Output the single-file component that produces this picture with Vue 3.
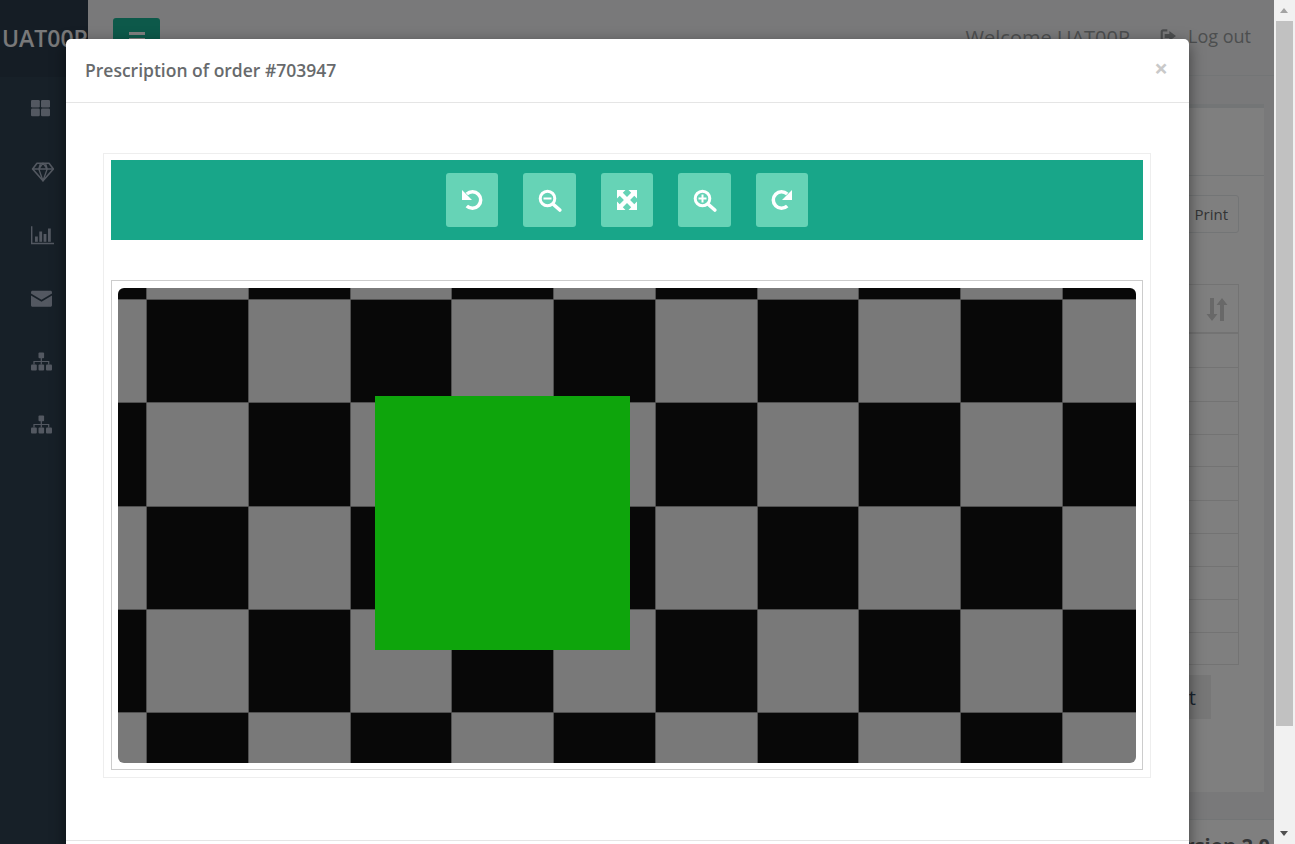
<script setup>
const navIcons = ['grid', 'gem', 'chart', 'mail', 'tree', 'tree']
const tools = [
  { name: 'undo', width: 52 },
  { name: 'minus', width: 53 },
  { name: 'expand', width: 52 },
  { name: 'plus', width: 53 },
  { name: 'redo', width: 52 }
]
const rowHeights = [34, 34, 33, 32, 34, 33, 33, 33, 33, 32]

const imageWidth = 1018
const imageHeight = 475
const xEdges = [0, 29, 131, 233, 334, 436, 538, 640, 741, 843, 945, imageWidth]
const yEdges = [0, 12, 115, 219, 322, 425, imageHeight]
const cells = []
for (let row = 0; row < yEdges.length - 1; row++) {
  for (let col = 0; col < xEdges.length - 1; col++) {
    cells.push({
      id: row + '-' + col,
      x: xEdges[col],
      y: yEdges[row],
      w: xEdges[col + 1] - xEdges[col],
      h: yEdges[row + 1] - yEdges[row],
      fill: (row + col) % 2 === 0 ? '#080808' : '#797979'
    })
  }
}
const innerX = xEdges.slice(1, -1)
const innerY = yEdges.slice(1, -1)
</script>

<template>
  <div class="screen">
    <div class="viewport">
      <div class="page">
        <aside class="sidebar">
          <div class="brand">UAT00P</div>
          <nav class="nav">
            <svg v-for="(icon, i) in navIcons" :key="i" class="nav-icon" viewBox="0 0 24 22">
              <g v-if="icon === 'grid'" fill="currentColor">
                <rect x="1" y="3" width="8.800" height="7.600" rx="1.300" />
                <rect x="11" y="3" width="9" height="7.600" rx="1.300" />
                <rect x="1" y="11.600" width="8.800" height="7.600" rx="1.300" />
                <rect x="11" y="11.600" width="9" height="7.600" rx="1.300" />
              </g>
              <g v-else-if="icon === 'gem'" fill="none" stroke="currentColor" stroke-linejoin="round">
                <path stroke-width="1.600" d="M7 3.200h12L23.400 9 13 20.800 2.600 9z" />
                <path stroke-width="1.300" d="M2.600 9h20.800M8.800 9 13 20.800 17.200 9M8.800 9 10.500 3.200M17.200 9 15.500 3.200M8.800 9 13 3.200 17.200 9" />
              </g>
              <g v-else-if="icon === 'chart'" fill="currentColor">
                <path d="M1 2.200h1.400v16.600H24v1.400H1z" />
                <rect x="5" y="12.500" width="2.800" height="5.300" />
                <rect x="9.300" y="7.500" width="2.800" height="10.300" />
                <rect x="13.600" y="10" width="2.800" height="7.800" />
                <rect x="18" y="4.500" width="2.800" height="13.300" />
              </g>
              <g v-else-if="icon === 'mail'" fill="currentColor">
                <path d="M1 5.300C1 4.500 1.700 3.800 2.500 3.800h18c.8 0 1.500.7 1.500 1.500v1.100L11.500 12.800 1 6.400z" />
                <path d="M1 8.400 11.500 14.800 22 8.400v9.900c0 .8-.7 1.500-1.500 1.500h-18C1.700 19.800 1 19.100 1 18.300z" />
              </g>
              <g v-else fill="currentColor">
                <rect x="8.500" y="1.400" width="5.600" height="5.800" rx="1" />
                <rect x="1" y="13.600" width="5.800" height="5.800" rx="1" />
                <rect x="8.500" y="13.600" width="5.600" height="5.800" rx="1" />
                <rect x="16" y="13.600" width="6" height="5.800" rx="1" />
                <path d="M10.700 7h1.200v2.900h7.400v3.700h-1.200v-2.500H4.600v2.500H3.400V9.900h7.300zM10.700 11h1.200v2.600h-1.200z" />
              </g>
            </svg>
          </nav>
        </aside>

        <div class="main">
          <header class="topbar">
            <button class="menu-btn" type="button">
              <span class="bars"><i></i><i></i><i></i></span>
            </button>
            <span class="welcome">Welcome UAT00P</span>
            <span class="logout">
              <svg class="logout-icon" viewBox="0 0 24 24">
                <path fill="currentColor" d="M1 5.500C1 3.500 2.500 2 4.500 2H11v3.200H5c-.5 0-.8.3-.8.8v12c0 .5.300.8.8.8h6V22H4.500C2.500 22 1 20.500 1 18.500zM14 4.500 24 12l-10 7.500v-4.500H7V9h7z" />
              </svg>
              Log out
            </span>
          </header>

          <section class="content">
            <div class="card">
              <div class="card-title"></div>
              <div class="card-body">
                <div class="actions"><button class="print-btn" type="button">Print</button></div>
                <div class="table">
                  <div class="table-head">
                    <svg class="sort-icon" viewBox="0 0 24 24">
                      <path fill="currentColor" d="M5 1h4v16h3.500L7 24 1.500 17H5zM15 8h-3.500L17 1l5.500 7H19v16h-4z" />
                    </svg>
                  </div>
                  <div v-for="(h, i) in rowHeights" :key="i" class="table-row" :style="{ height: h + 'px' }"></div>
                </div>
                <div class="pager"><button class="next-btn" type="button">Next</button></div>
              </div>
            </div>
          </section>

          <footer class="footer"><strong>Version 2.0</strong></footer>
        </div>
      </div>

      <div class="backdrop"></div>

      <div class="modal">
        <div class="modal-header">
          <h4 class="modal-title">Prescription of order #703947</h4>
          <span class="close">×</span>
        </div>
        <div class="modal-body">
          <div class="viewer">
            <div class="toolbar">
              <button
                v-for="tool in tools"
                :key="tool.name"
                class="tool"
                type="button"
                :style="{ width: tool.width + 'px' }"
              >
                <svg class="tool-icon" viewBox="0 0 24 24">
                  <g v-if="tool.name === 'undo'">
                    <path fill="none" stroke="currentColor" stroke-width="3.500" d="M6.800 6.100A8.200 8.200 0 1 1 6.800 17.900" />
                    <path fill="currentColor" d="M2 2v10h10z" />
                  </g>
                  <g v-else-if="tool.name === 'redo'">
                    <path fill="none" stroke="currentColor" stroke-width="3.500" d="M17.200 6.100A8.200 8.200 0 1 0 17.200 17.900" />
                    <path fill="currentColor" d="M22 2v10H12z" />
                  </g>
                  <g v-else-if="tool.name === 'minus' || tool.name === 'plus'">
                    <circle cx="9.500" cy="10.500" r="7.300" fill="none" stroke="currentColor" stroke-width="3" />
                    <path d="M15.500 16.500 21.800 22" stroke="currentColor" stroke-width="3.600" stroke-linecap="round" />
                    <path d="M5.500 10.500h8" stroke="currentColor" stroke-width="2" />
                    <path v-if="tool.name === 'plus'" d="M9.500 6.500v8" stroke="currentColor" stroke-width="2" />
                  </g>
                  <g v-else fill="currentColor">
                    <path d="M2 2h8.500L7.800 4.700l4.200 4.200 4.200-4.200L13.500 2H22v8.500l-2.700-2.700-4.200 4.200 4.200 4.200 2.700-2.700V22h-8.500l2.700-2.700-4.200-4.200-4.200 4.200 2.700 2.700H2v-8.500l2.700 2.700 4.200-4.200-4.200-4.200L2 10.500z" />
                  </g>
                </svg>
              </button>
            </div>
            <div class="image-frame">
              <div class="image">
                <svg class="checker" :viewBox="`0 0 ${imageWidth} ${imageHeight}`" shape-rendering="crispEdges">
                  <rect v-for="c in cells" :key="c.id" :x="c.x" :y="c.y" :width="c.w" :height="c.h" :fill="c.fill" />
                  <rect v-for="x in innerX" :key="'v' + x" :x="x - 1" y="0" width="1" :height="imageHeight" fill="#505050" />
                  <rect v-for="y in innerY" :key="'h' + y" x="0" :y="y - 1" :width="imageWidth" height="1" fill="#505050" />
                  <rect x="257" y="108" width="255" height="254" fill="#0ea50c" />
                </svg>
              </div>
            </div>
          </div>
        </div>
        <div class="modal-footer"></div>
      </div>
    </div>

    <div class="scrollbar">
      <span class="arrow arrow-up"></span>
      <span class="thumb"></span>
      <span class="arrow arrow-down"></span>
    </div>
  </div>
</template>

<style>
html, body { margin: 0; overflow: hidden; }
</style>

<style scoped>
.screen {
  display: flex;
  width: 1295px;
  height: 844px;
  overflow: hidden;
  font-family: "Open Sans", "Liberation Sans", sans-serif;
  color: #676a6c;
}
.viewport {
  position: relative;
  width: 1274px;
  height: 844px;
  overflow: hidden;
  flex: none;
}
.page {
  display: flex;
  height: 844px;
  background: #f3f3f4;
}
.sidebar {
  width: 88px;
  flex: none;
  background: #2f4050;
}
.brand {
  height: 77px;
  box-sizing: border-box;
  padding: 23px 0 0 2px;
  background: #2a3a4a;
  color: #f3f3f4;
  font-size: 23px;
  font-weight: 600;
  line-height: 30px;
  white-space: nowrap;
  overflow: hidden;
}
.nav {
  display: flex;
  flex-direction: column;
  gap: 41.400px;
  padding: 20px 0 0 30px;
  color: #a7b1c2;
}
.nav-icon {
  display: block;
  width: 24px;
  height: 22px;
}
.main {
  flex: 1;
  min-width: 0;
  display: flex;
  flex-direction: column;
}
.topbar {
  height: 76px;
  box-sizing: border-box;
  flex: none;
  display: flex;
  align-items: center;
  padding: 0 23px 0 25px;
  border-bottom: 1px solid #e7eaec;
  color: #999c9e;
  font-size: 18px;
}
.menu-btn {
  width: 47px;
  height: 42px;
  margin: 3px auto 0 0;
  padding: 0;
  border: 0;
  border-radius: 3px;
  background: #1ab394;
  display: flex;
  align-items: center;
  justify-content: center;
}
.bars {
  display: flex;
  flex-direction: column;
  gap: 3px;
  width: 16px;
}
.bars i {
  height: 3px;
  background: #fff;
}
.welcome {
  margin-right: 30px;
  font-size: 20px;
  white-space: nowrap;
}
.logout {
  display: flex;
  align-items: center;
  gap: 12px;
  margin-top: -3px;
  white-space: nowrap;
}
.logout-icon {
  width: 16px;
  height: 16px;
}
.content {
  flex: 1;
  min-height: 0;
  padding: 28px 10px 27px 24px;
}
.card {
  height: 688px;
  box-sizing: border-box;
  border-top: 4px solid #e7eaec;
  background: #fff;
}
.card-title {
  height: 67px;
  border-bottom: 1px solid #e7eaec;
}
.card-body {
  padding: 19px 25px 0 25px;
}
.actions {
  display: flex;
  justify-content: flex-end;
  height: 89px;
}
.print-btn {
  height: 38px;
  padding: 0 10px 0 60px;
  border: 1px solid #e7eaec;
  border-radius: 3px;
  background: #fff;
  color: #676a6c;
  font: 15px "Open Sans", sans-serif;
}
.table {
  border: 1px solid #e7e7e7;
  border-width: 1px 1px 0;
}
.table-head {
  height: 47px;
  border-bottom: 2px solid #e7e7e7;
  display: flex;
  align-items: center;
  justify-content: flex-end;
  padding-right: 9px;
}
.sort-icon {
  width: 24px;
  height: 24px;
  color: #d0d0d0;
}
.table-row {
  box-sizing: border-box;
  border-bottom: 1px solid #e7e7e7;
}
.pager {
  display: flex;
  justify-content: flex-end;
  padding: 10px 28px 0 0;
}
.next-btn {
  height: 44px;
  padding: 0 15px;
  border: 0;
  background: #eeeeee;
  color: #34495e;
  font: 20px "Open Sans", sans-serif;
}
.footer {
  height: 25px;
  flex: none;
  box-sizing: border-box;
  border-top: 1px solid #e7eaec;
  background: #fff;
  padding: 11px 4px 0 0;
  text-align: right;
  font-size: 20px;
  line-height: 30px;
  white-space: nowrap;
}
.backdrop {
  position: absolute;
  inset: 0;
  background: rgba(0, 0, 0, 0.5);
}
.modal {
  position: absolute;
  left: 66px;
  top: 39px;
  width: 1123px;
  background: #fff;
  border-radius: 5px;
  box-shadow: 0 5px 15px rgba(0, 0, 0, 0.5);
}
.modal-header {
  height: 64px;
  box-sizing: border-box;
  display: flex;
  justify-content: space-between;
  padding: 0 21px 0 19px;
  border-bottom: 1px solid #e5e5e5;
}
.modal-title {
  margin: 18px 0 0;
  font-size: 17.500px;
  font-weight: 600;
  line-height: 27px;
  color: #676a6c;
}
.close {
  margin-top: 14px;
  font-size: 24px;
  font-weight: 700;
  line-height: 30px;
  color: #c9c9c9;
}
.modal-body {
  padding: 50px 38px 62px 37px;
}
.viewer {
  border: 1px solid #eeeeee;
  padding: 6px 7px 7px;
}
.toolbar {
  height: 80px;
  background: #18a689;
  display: flex;
  align-items: center;
  justify-content: center;
  gap: 25px;
}
.tool {
  height: 54px;
  padding: 0;
  border: 0;
  border-radius: 3px;
  background: #66d3b6;
  color: #fff;
  display: flex;
  align-items: center;
  justify-content: center;
}
.tool-icon {
  width: 24px;
  height: 24px;
}
.image-frame {
  margin-top: 40px;
  border: 1px solid #cccccc;
  padding: 7px 6px 6px;
}
.image {
  height: 475px;
  border-radius: 6px;
  overflow: hidden;
}
.checker {
  display: block;
  width: 100%;
  height: 100%;
}
.modal-footer {
  height: 60px;
  border-top: 1px solid #e5e5e5;
}
.scrollbar {
  position: relative;
  width: 21px;
  height: 844px;
  flex: none;
  background: #f1f1f1;
}
.thumb {
  position: absolute;
  left: 2px;
  top: 21px;
  width: 17px;
  height: 705px;
  background: #c1c1c1;
}
.arrow {
  position: absolute;
  left: 6px;
  width: 0;
  height: 0;
  border-left: 4.500px solid transparent;
  border-right: 4.500px solid transparent;
}
.arrow-up {
  top: 8px;
  border-bottom: 5px solid #a3a3a3;
}
.arrow-down {
  bottom: 8px;
  border-top: 5px solid #505050;
}
</style>
